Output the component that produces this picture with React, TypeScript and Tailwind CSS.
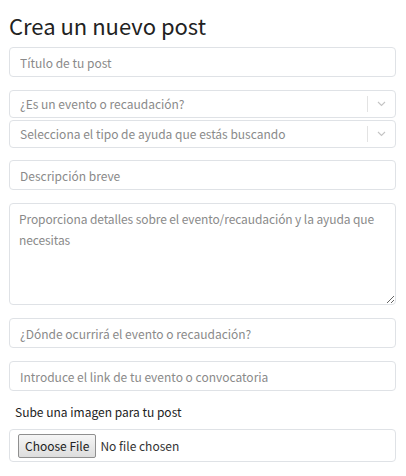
import React from 'react';

const field =
  'w-full h-[30px] rounded-[4px] border border-[#dfe2e6] bg-white px-[10px] text-[12px] text-[#333] placeholder:text-[#8a8a8a] outline-none';

const FakeSelect: React.FC<{ placeholder: string }> = ({ placeholder }) => (
  <div className="flex h-[28px] w-full items-center rounded-[4px] border border-[#dfe2e6] bg-white">
    <span className="flex-1 pl-[10px] text-[12px] text-[#8a8a8a]">{placeholder}</span>
    <span className="h-[16px] w-px bg-[#e3e3e3]" />
    <span className="flex w-[27px] items-center justify-center">
      <svg width="9" height="6" viewBox="0 0 9 6" fill="none">
        <path d="M1 1l3.5 3.5L8 1" stroke="#c4c4c4" strokeWidth="1.1" />
      </svg>
    </span>
  </div>
);

export default function App() {
  return (
    <div
      className="w-[406px] bg-white pl-[9px] pr-[10px] pt-[12px]"
      style={{ fontFamily: '"Noto Sans CJK KR", "Noto Sans", sans-serif' }}
    >
      <h1 className="text-[22px] leading-[26px] text-[#222]">Crea un nuevo post</h1>
      <input className={`${field} mt-[9px]`} placeholder="Título de tu post" />
      <div className="mt-[13px] flex flex-col gap-[2px]">
        <FakeSelect placeholder="¿Es un evento o recaudación?" />
        <FakeSelect placeholder="Selecciona el tipo de ayuda que estás buscando" />
      </div>
      <input className={`${field} mt-[12px]`} placeholder="Descripción breve" />
      <textarea
        className="mt-[13px] block h-[102px] w-full resize-y rounded-[4px] border border-[#dfe2e6] bg-white px-[9px] py-[4px] text-[12px] leading-[21px] tracking-[-0.1px] text-[#333] placeholder:text-[#8a8a8a] outline-none"
        placeholder="Proporciona detalles sobre el evento/recaudación y la ayuda que necesitas"
      />
      <input className={`${field} mt-[13px]`} placeholder="¿Dónde ocurrirá el evento o recaudación?" />
      <input className={`${field} mt-[13px]`} placeholder="Introduce el link de tu evento o convocatoria" />
      <p className="mt-[12px] pl-[6px] text-[12px] leading-[18px] text-[#222]">Sube una imagen para tu post</p>
      <div className="mt-[8px] flex h-[33px] items-center rounded-[4px] border border-[#dfe2e6] px-[8px]">
        <input
          type="file"
          className="text-[12px] text-[#333] file:mr-[4px] file:h-[24px] file:rounded-[2px] file:border file:border-[#8f8f8f] file:bg-gradient-to-b file:from-[#f6f6f6] file:to-[#dddddd] file:px-[6px] file:text-[12px] file:text-[#222]"
        />
      </div>
    </div>
  );
}
